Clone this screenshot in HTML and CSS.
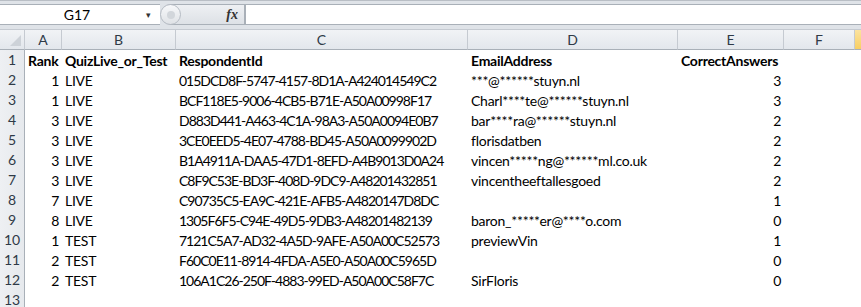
FILE: index.html
```html
<!DOCTYPE html>
<html lang="en">
<head>
  <meta charset="UTF-8" />
  <title>Quiz results - Excel</title>
  <link rel="stylesheet" href="styles.css">
</head>
<body>
  <div class="formula-bar">
    <div class="name-box">
      <span class="cell-ref">G17</span>
      <span class="drop">&#9662;</span>
    </div>
    <div class="fx-area">
      <span class="knob"><span class="dot"></span></span>
      <span class="fx">fx</span>
    </div>
    <div class="formula-input"></div>
  </div>

  <div class="sheet">
    <div class="row head">
      <div class="corner"><span class="tri"></span></div>
      <div class="col">A</div>
      <div class="col">B</div>
      <div class="col">C</div>
      <div class="col">D</div>
      <div class="col">E</div>
      <div class="col">F</div>
      <div class="col sel"></div>
    </div>
    <div id="rows"></div>
  </div>

  <script>
    const data = [
      ['Rank', 'QuizLive_or_Test', 'RespondentId', 'EmailAddress', 'CorrectAnswers'],
      ['1', 'LIVE', '015DCD8F-5747-4157-8D1A-A424014549C2', '***@******stuyn.nl', '3'],
      ['1', 'LIVE', 'BCF118E5-9006-4CB5-B71E-A50A00998F17', 'Charl****te@******stuyn.nl', '3'],
      ['3', 'LIVE', 'D883D441-A463-4C1A-98A3-A50A0094E0B7', 'bar****ra@******stuyn.nl', '2'],
      ['3', 'LIVE', '3CE0EED5-4E07-4788-BD45-A50A0099902D', 'florisdatben', '2'],
      ['3', 'LIVE', 'B1A4911A-DAA5-47D1-8EFD-A4B9013D0A24', 'vincen*****ng@******ml.co.uk', '2'],
      ['3', 'LIVE', 'C8F9C53E-BD3F-408D-9DC9-A48201432851', 'vincentheeftallesgoed', '2'],
      ['7', 'LIVE', 'C90735C5-EA9C-421E-AFB5-A4820147D8DC', '', '1'],
      ['8', 'LIVE', '1305F6F5-C94E-49D5-9DB3-A48201482139', 'baron_*****er@****o.com', '0'],
      ['1', 'TEST', '7121C5A7-AD32-4A5D-9AFE-A50A00C52573', 'previewVin', '1'],
      ['2', 'TEST', 'F60C0E11-8914-4FDA-A5E0-A50A00C5965D', '', '0'],
      ['2', 'TEST', '106A1C26-250F-4883-99ED-A50A00C58F7C', 'SirFloris', '0'],
      ['', '', '', '', '']
    ];
    const rows = document.getElementById('rows');
    data.forEach((r, i) => {
      const row = document.createElement('div');
      row.className = 'row' + (i === 0 ? ' title' : '');
      let html = '<div class="num">' + (i + 1) + '</div>';
      r.forEach((v, j) => {
        let cls = 'cell';
        if (i > 0 && (j === 0 || j === 4)) cls += ' r';
        if (i > 0 && j === 2) cls += ' guid';
        html += '<div class="' + cls + '">' + v + '</div>';
      });
      html += '<div class="cell"></div><div class="cell"></div>';
      row.innerHTML = html;
      rows.appendChild(row);
    });
  </script>
</body>
</html>
```

FILE: styles.css
```css
* { box-sizing: border-box; }
body {
  margin: 0;
  width: 861px;
  height: 307px;
  overflow: hidden;
  background: #fff;
  font-family: Lato, "Open Sans", sans-serif;
  font-size: 14px;
  color: #000;
}

/* formula bar */
.formula-bar {
  display: flex;
  height: 30px;
  padding: 3px 0 4px 0;
  background: #dfe3e8;
  border-top: 1px solid #b9bec5;
  border-bottom: 1px solid #c5cad1;
}
.name-box {
  width: 160px;
  display: flex;
  align-items: center;
  background: #fff;
  border-top: 1px solid #a9b0b8;
  border-bottom: 1px solid #a9b0b8;
}
.cell-ref {
  flex: 1;
  text-align: center;
  font-size: 14px;
  padding-left: 8px;
}
.drop {
  width: 14px;
  font-size: 9px;
  color: #333;
}
.fx-area {
  width: 84px;
  display: flex;
  align-items: center;
  justify-content: space-between;
  background: linear-gradient(#eef0f3, #dde1e6);
  border: 1px solid #a9b0b8;
  border-left: none;
  border-radius: 11px 0 0 11px;
  margin-left: 1px;
}
.knob {
  width: 21px;
  height: 21px;
  border-radius: 50%;
  border: 1px solid #b6bcc4;
  background: linear-gradient(#f7f8fa, #dfe2e6);
  display: flex;
  align-items: center;
  justify-content: center;
  margin-left: -1px;
}
.dot {
  width: 8px;
  height: 8px;
  border-radius: 50%;
  background: #d2d6db;
}
.fx {
  font-family: "Liberation Serif", serif;
  font-style: italic;
  font-weight: bold;
  font-size: 14px;
  color: #333;
  margin-right: 6px;
}
.formula-input {
  flex: 1;
  background: #fff;
  border-top: 1px solid #a9b0b8;
  border-bottom: 1px solid #a9b0b8;
  border-left: 1px solid #a9b0b8;
}

/* sheet grid */
.row {
  display: grid;
  grid-template-columns: 25px 37px 114px 292px 210px 106px 71px 6px;
  height: 20px;
}
.head .col, .corner {
  background: linear-gradient(#f1f3f6, #e3e7ec);
  border-right: 1px solid #c5cad1;
  border-bottom: 1px solid #a9b0b8;
  text-align: center;
  line-height: 19px;
  color: #2f3a47;
  font-size: 14px;
}
.head .sel {
  background: linear-gradient(#fbe3a0, #f8cf62);
  border-right: none;
}
.corner { position: relative; }
.tri {
  position: absolute;
  right: 3px;
  bottom: 3px;
  width: 0;
  height: 0;
  border-left: 11px solid transparent;
  border-bottom: 11px solid #cdd2d8;
}
.num {
  background: linear-gradient(90deg, #eef0f3, #e6e9ed);
  border-right: 1px solid #a9b0b8;
  border-bottom: 1px solid #c5cad1;
  text-align: center;
  line-height: 20px;
  color: #2f3a47;
}
.cell {
  padding: 0 3px;
  line-height: 21px;
  white-space: nowrap;
  overflow: hidden;
  letter-spacing: -0.25px;
}
.cell.r { text-align: right; }
.cell.guid { letter-spacing: -1px; }
.title .cell { font-weight: bold; overflow: visible; }
```
